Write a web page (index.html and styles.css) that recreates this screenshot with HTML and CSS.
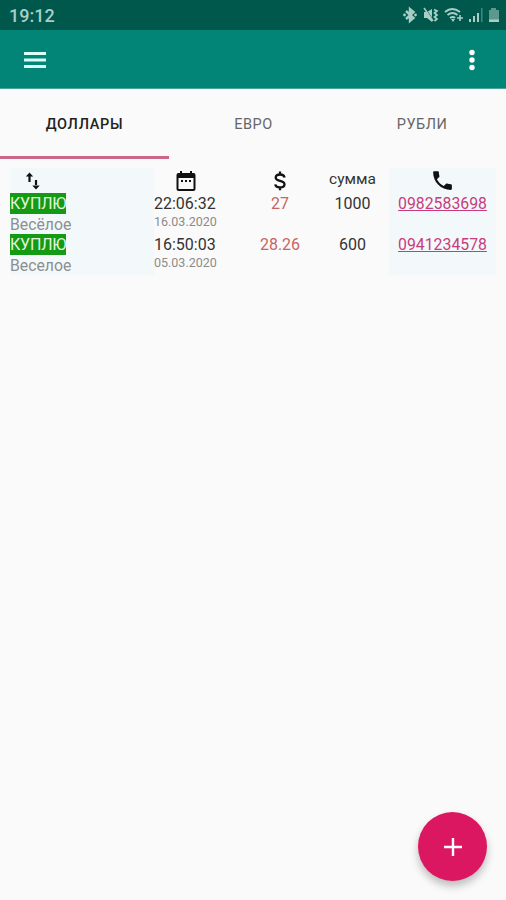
FILE: index.html
```html
<!DOCTYPE html>
<html lang="ru">
<head>
<meta charset="utf-8">
<title>Доллары</title>
<link rel="stylesheet" href="styles.css">
</head>
<body>
<div class="status">
  <span class="clock">19:12</span>
  <div class="status-icons">
    <svg width="16" height="18" viewBox="0 0 16 18"><path d="M4 5l7.500 7L8 15V3l3.500 3L4 13" fill="none" stroke="currentColor" stroke-width="2.400"/><circle cx="2.500" cy="9" r="1.400"/><circle cx="13.500" cy="9" r="1.400"/></svg>
    <svg width="16" height="18" viewBox="0 0 16 18"><path d="M1 6h3l5-3v13l-5-4H1z"/><path d="M2 2l9 13" stroke="#00584c" stroke-width="1"/><path d="M1 2l9 13" stroke="currentColor" stroke-width="1.500"/><path d="M11 3.500l3 1.500-2.500 2 2.500 2-2.500 2 2.500 2-2.500 2" fill="none" stroke="currentColor" stroke-width="1.700"/></svg>
    <svg width="20" height="18" viewBox="0 0 20 18"><path d="M1 6q7-6 15 0M3.500 9q5-4 10 0M6 12q3-2 5 0" fill="none" stroke="currentColor" stroke-width="2"/><path d="M7 13h4l-2 3z"/><path d="M13 12h6M16 9v6" stroke="currentColor" stroke-width="1.600"/></svg>
    <svg width="14" height="18" viewBox="0 0 14 18"><path d="M0 13h2v3H0zM4 10h2v6H4zM8 7h2v9H8z"/><path d="M12 2h1.500v14H12z" opacity=".4"/></svg>
    <svg width="12" height="18" viewBox="0 0 12 18"><path d="M3 2h5v2h3v10H1V4h2z" opacity=".55"/><path d="M1 13.500h10V16H1z"/></svg>
  </div>
</div>
<header class="appbar">
  <svg class="menu" width="24" height="18" viewBox="0 0 24 18"><path d="M1 1h22v3H1zM1 7.500h22v3H1zM1 14h22v3H1z"/></svg>
  <svg class="more" width="6" height="22" viewBox="0 0 6 22"><circle cx="3" cy="3.500" r="2.700"/><circle cx="3" cy="11" r="2.700"/><circle cx="3" cy="18.500" r="2.700"/></svg>
</header>
<nav class="tabs">
  <div class="tab active">ДОЛЛАРЫ</div>
  <div class="tab">ЕВРО</div>
  <div class="tab">РУБЛИ</div>
</nav>
<main class="table">
  <section class="col tinted kind">
    <div class="head"><svg width="16" height="20" viewBox="0 0 16 20"><path d="M4.500 11V3M11 9v5" fill="none" stroke="#111" stroke-width="2.200"/><path d="M.8 5.500L4.500 1.500l3.700 4zM7.300 14.500h7.400L11 18.500z"/></svg></div>
    <div class="row"><div class="main"><span class="badge">КУПЛЮ</span></div><div class="place">Весёлое</div></div>
    <div class="row"><div class="main"><span class="badge">КУПЛЮ</span></div><div class="place">Веселое</div></div>
  </section>
  <section class="col date">
    <div class="head"><svg width="20" height="22" viewBox="0 0 20 22"><path fill-rule="evenodd" d="M4 1h2v2h8V1h2v2h1.500q2 0 2 2v14q0 2-2 2h-15q-2 0-2-2V5q0-2 2-2H4zM2.500 8v11h15V8z"/><path d="M5 10h2v2H5zM9 10h2v2H9zM13 10h2v2h-2z"/></svg></div>
    <div class="row"><div class="main">22:06:32</div><div class="day">16.03.2020</div></div>
    <div class="row"><div class="main">16:50:03</div><div class="day">05.03.2020</div></div>
  </section>
  <section class="col centered price">
    <div class="head"><svg width="12" height="22" viewBox="0 0 12 22"><path d="M10.600 7.500Q10 4.500 6 4.500 1.700 4.500 1.700 7.600 1.700 10 6 10.900 10.500 11.800 10.500 14.400 10.500 17.300 6 17.300 1.600 17.300 1.300 14.400M6 1.500v3M6 17v3.200" fill="none" stroke="#111" stroke-width="2.300"/></svg></div>
    <div class="row"><div class="main">27</div></div>
    <div class="row"><div class="main">28.26</div></div>
  </section>
  <section class="col centered">
    <div class="head sum"><span>сумма</span></div>
    <div class="row"><div class="main">1000</div></div>
    <div class="row"><div class="main">600</div></div>
  </section>
  <section class="col centered tinted">
    <div class="head"><svg width="25" height="25" viewBox="0 0 24 24"><path d="M6.620 10.790c1.440 2.830 3.760 5.140 6.590 6.590l2.200-2.200c.27-.27.67-.36 1.020-.24 1.120.37 2.330.57 3.570.57.550 0 1 .45 1 1V20c0 .55-.45 1-1 1C10.610 21 3 13.390 3 4c0-.55.45-1 1-1h3.500c.55 0 1 .45 1 1 0 1.250.2 2.450.57 3.570.11.35.03.74-.25 1.020z"/></svg></div>
    <div class="row"><div class="main"><span class="phone">0982583698</span></div></div>
    <div class="row"><div class="main"><span class="phone">0941234578</span></div></div>
  </section>
</main>
<div class="fab"><svg width="18" height="18" viewBox="0 0 18 18"><path d="M9 0v18M0 9h18" stroke="#fff" stroke-width="2.400"/></svg></div>
</body>
</html>
```
FILE: styles.css
```css
* { box-sizing: border-box; }
body {
  margin: 0;
  height: 900px;
  overflow: hidden;
  background: #fafafa;
  color: #333;
  font-family: Roboto, "Liberation Sans", sans-serif;
}
svg { display: block; flex: none; }
.status {
  height: 30px;
  padding: 0 6px 0 9px;
  display: flex;
  align-items: center;
  justify-content: space-between;
  background: #00584c;
  color: #a9cdc7;
}
.clock { font-size: 18px; font-weight: 500; }
.status-icons { display: flex; gap: 5px; fill: currentColor; }
.appbar {
  height: 59px;
  padding: 1px 31px 0 23px;
  display: flex;
  align-items: center;
  justify-content: space-between;
  background: #028576;
  border-bottom: 1px solid #4aa599;
}
.menu { fill: #d8fff8; }
.more { fill: #fff; }
.tabs {
  height: 70px;
  display: grid;
  grid-template-columns: 169px 169px 168px;
  font-size: 14.500px;
  letter-spacing: .5px;
  color: #666;
}
.tab {
  display: flex;
  align-items: center;
  justify-content: center;
  border-bottom: 3px solid transparent;
  padding-top: 3px;
}
.active { color: #222; border-color: #c96889; font-weight: 500; letter-spacing: .7px; }
.table {
  padding: 9px 10px 0;
  display: grid;
  grid-template-columns: 144px 90px 72px 73px 107px;
  font-size: 16px;
}
.tinted { background: #f3f9fb; }
.head { height: 25px; display: flex; align-items: center; }
.head svg { fill: #111; }
.kind .head { padding-left: 15px; }
.date .head { padding-left: 22px; }
.centered { text-align: center; }
.centered .head { justify-content: center; }
.sum { font-size: 15.500px; padding-bottom: 3px; }
.row { height: 41px; }
.main { height: 21px; line-height: 21px; white-space: nowrap; }
.badge { display: inline-block; width: 56px; height: 21px; letter-spacing: -.2px; background: #149a14; color: #e2f5dc; }
.place { font-size: 15.800px; line-height: 22px; color: #8b8f90; }
.day { font-size: 12.500px; line-height: 16px; color: #8b8b8b; }
.price { color: #c86464; }
.phone { font-size: 15.800px; color: #c83c7c; text-decoration: underline; }
.fab {
  position: absolute;
  left: 418px;
  top: 812px;
  width: 69px;
  height: 69px;
  border-radius: 50%;
  display: flex;
  align-items: center;
  justify-content: center;
  background: #dc1761;
  box-shadow: 0 5px 9px rgba(0, 0, 0, .25);
}
```
